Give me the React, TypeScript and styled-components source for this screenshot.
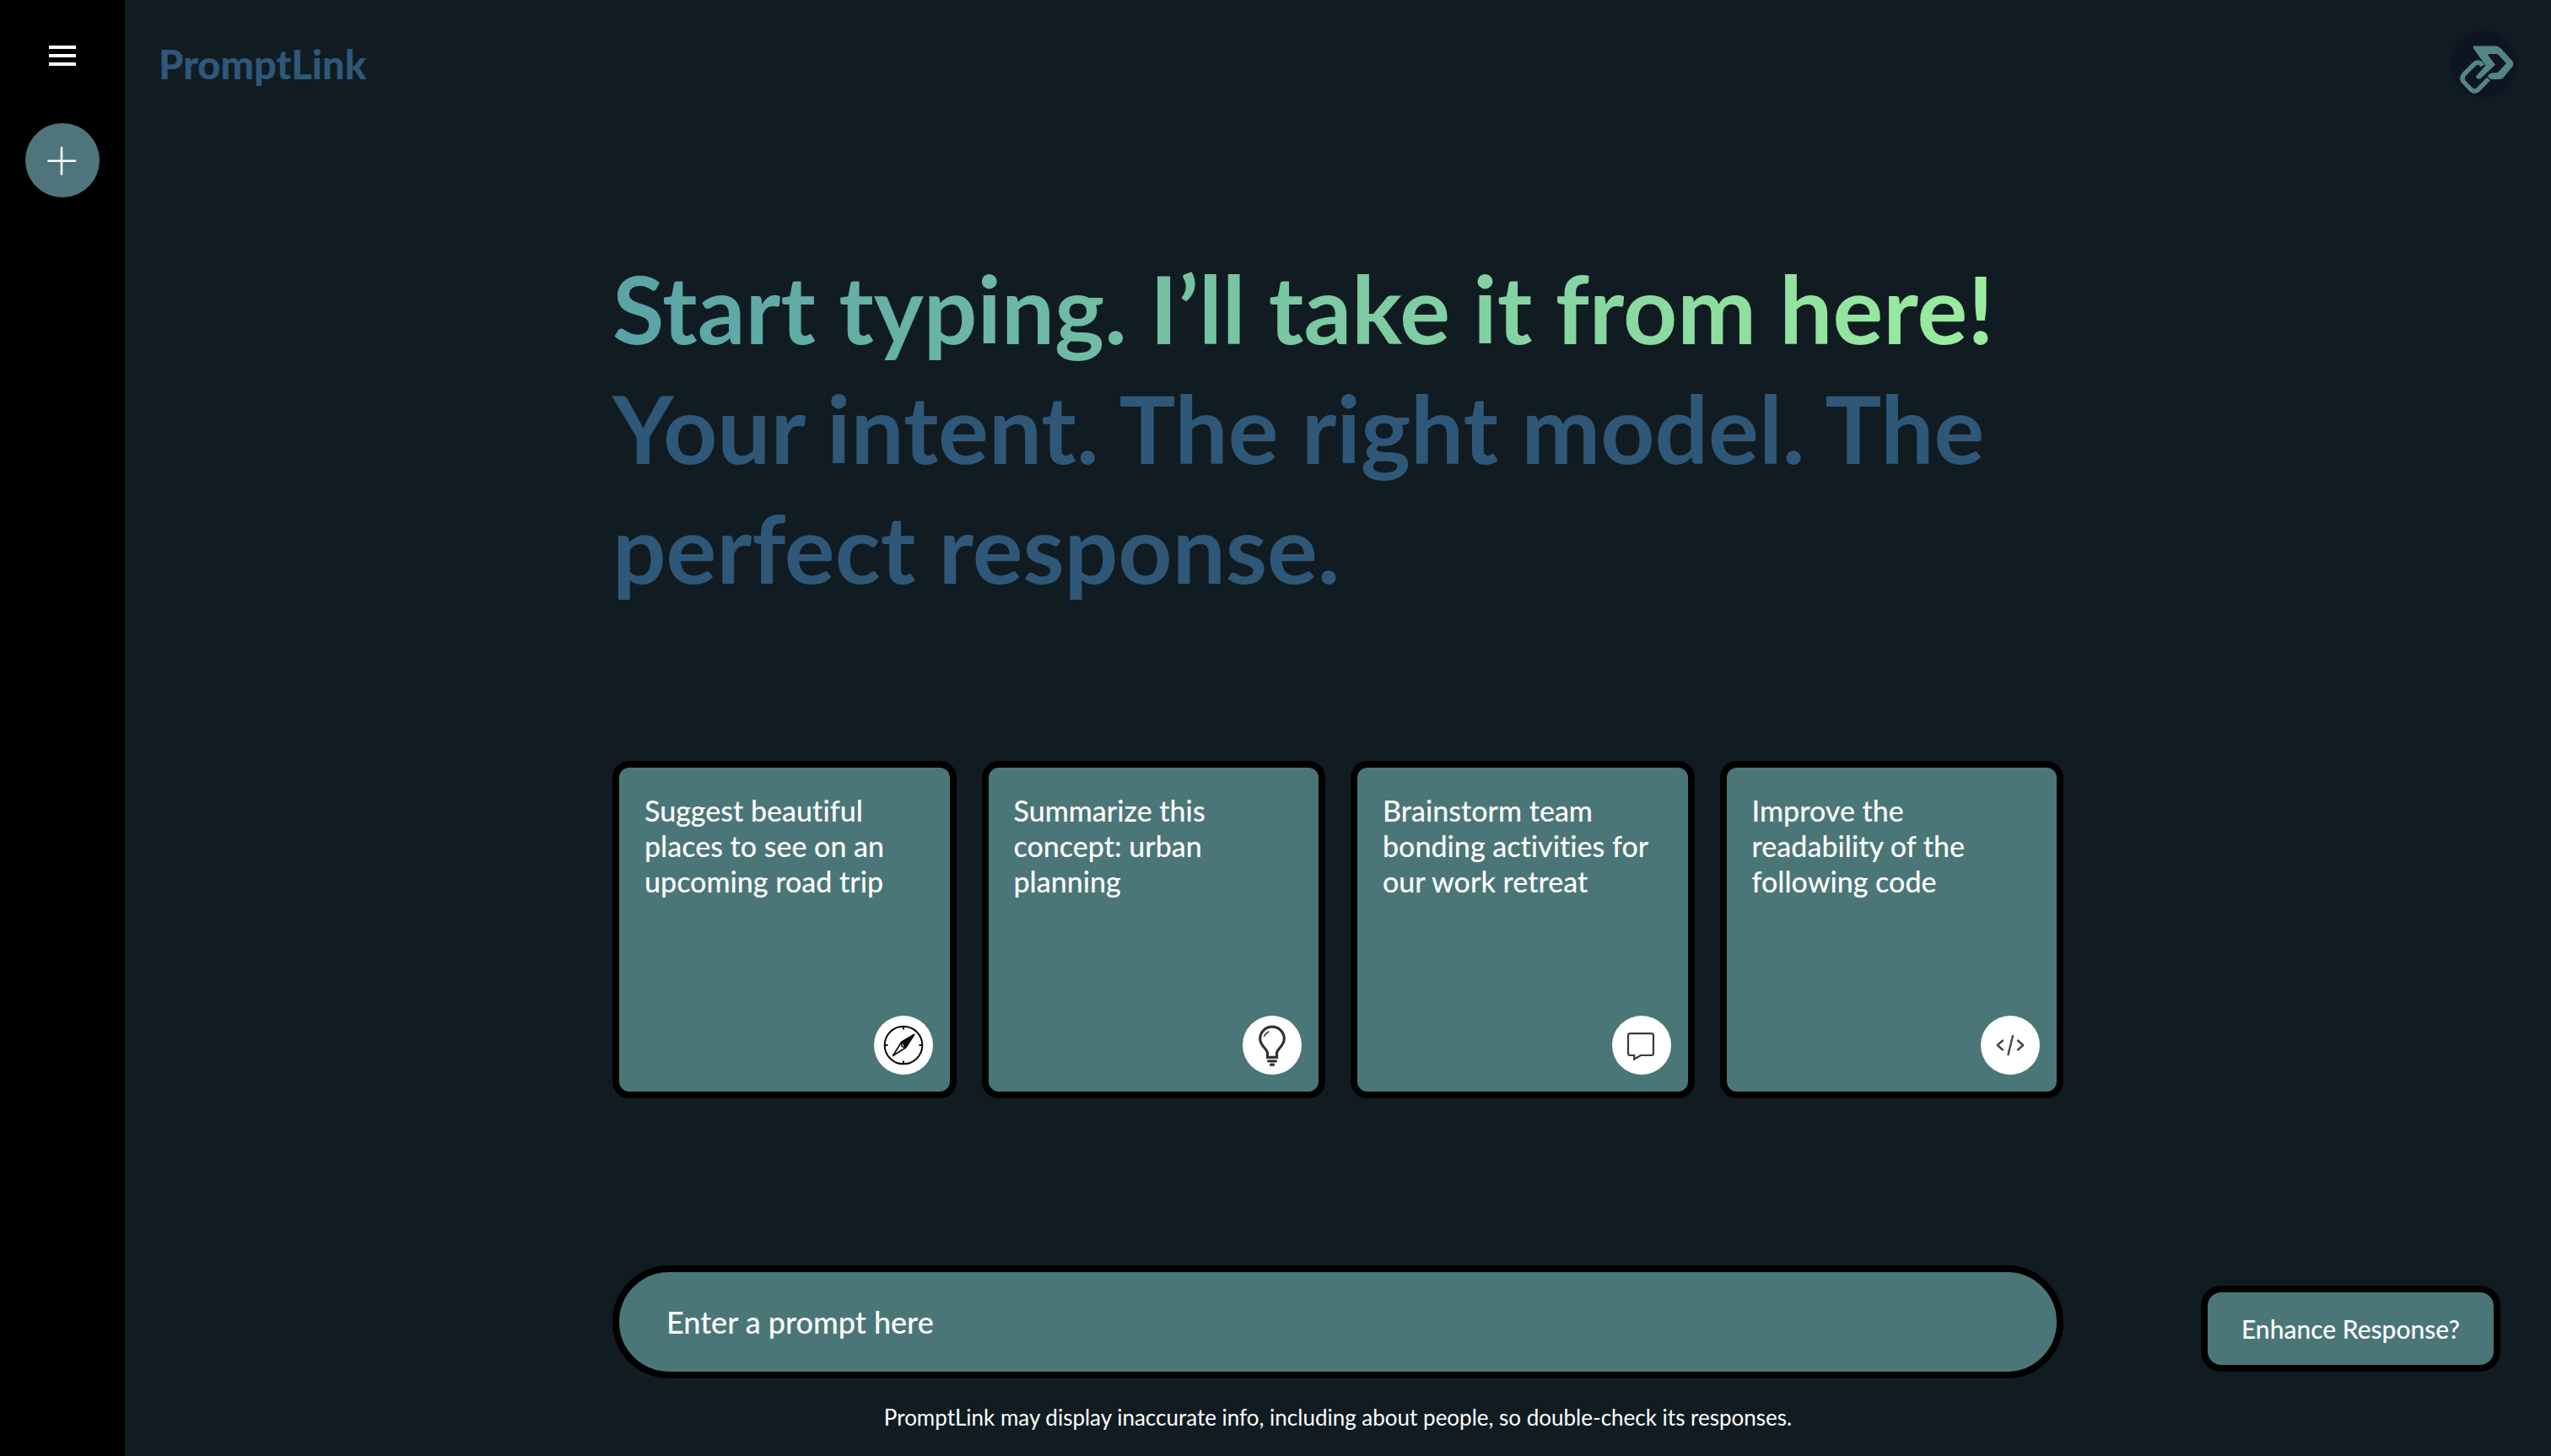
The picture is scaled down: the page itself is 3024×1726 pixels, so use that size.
import React from "react";
import styled, { createGlobalStyle } from "styled-components";

const GlobalStyle = createGlobalStyle`
  *, *::before, *::after { box-sizing: border-box; }
  body {
    margin: 0;
    background: #111c22;
    color: #fff;
    font-family: Lato, "Open Sans", sans-serif;
    font-variant-ligatures: none;
  }
  button, input { font: inherit; color: inherit; font-variant-ligatures: none; }
`;

const Shell = styled.div`
  display: flex;
  min-height: 100vh;
`;

const Sidebar = styled.nav`
  display: flex;
  flex-direction: column;
  align-items: center;
  gap: 64px;
  flex: none;
  width: 148px;
  padding: 50px 30px;
  background: #000;
`;

const MenuButton = styled.button`
  display: flex;
  padding: 0;
  border: 0;
  background: none;
  cursor: pointer;
`;

const NewChatButton = styled.button`
  display: flex;
  align-items: center;
  justify-content: center;
  width: 88px;
  height: 88px;
  padding: 0;
  border: 0;
  border-radius: 50%;
  background: #4f747c;
  cursor: pointer;
`;

const Main = styled.main`
  display: flex;
  flex-direction: column;
  flex: 1;
  min-width: 0;
`;

const Header = styled.header`
  display: flex;
  align-items: center;
  justify-content: space-between;
  padding: 36px 40px;
`;

const Brand = styled.p`
  margin: 0;
  color: #2f5778;
  font-size: 47px;
  font-weight: 900;
  line-height: 60px;
`;

const Content = styled.div`
  display: flex;
  flex-direction: column;
  flex: 1;
  width: 100%;
  max-width: 1720px;
  margin: 0 auto;
`;

const Greeting = styled.h1`
  margin: 142px 0 182px;
  color: #2f5778;
  font-size: 112px;
  font-weight: 700;
  line-height: 142px;
`;

const Accent = styled.span`
  display: block;
  width: fit-content;
  background: linear-gradient(80deg, #59a2a7, #9ced9f);
  background-clip: text;
  -webkit-background-clip: text;
  color: transparent;
`;

const Cards = styled.div`
  display: grid;
  grid-template-columns: repeat(4, 1fr);
  gap: 30px;
`;

const Card = styled.button`
  display: flex;
  flex-direction: column;
  justify-content: space-between;
  min-height: 400px;
  padding: 30px 20px 20px 30px;
  border: 8px solid #000;
  border-radius: 20px;
  background: #4b7677;
  font-size: 34px;
  font-weight: 500;
  line-height: 42px;
  text-align: left;
  cursor: pointer;
`;

const CardIcon = styled.span`
  display: flex;
  align-items: center;
  justify-content: center;
  align-self: flex-end;
  width: 70px;
  height: 70px;
  border-radius: 50%;
  background: #fff;
`;

const PromptArea = styled.form`
  margin-top: auto;
  padding-bottom: 30px;
`;

const PromptInput = styled.input`
  display: block;
  width: 100%;
  height: 134px;
  padding: 0 56px;
  border: 8px solid #000;
  border-radius: 67px;
  background: #4b7677;
  font-size: 36px;
  font-weight: 500;
  outline: none;
  &::placeholder { color: #fff; opacity: 1; }
`;

const Notice = styled.p`
  margin: 30px 0 0;
  font-size: 26px;
  line-height: 32px;
  text-align: center;
`;

const EnhanceButton = styled.button`
  position: fixed;
  right: 60px;
  bottom: 100px;
  padding: 24px 40px;
  border: 8px solid #000;
  border-radius: 24px;
  background: #4b7677;
  font-size: 30px;
  font-weight: 500;
  line-height: 38px;
  cursor: pointer;
`;

const MenuIcon = () => (
  <svg width="32" height="32" viewBox="0 0 32 32" fill="#fff" aria-hidden="true">
    <rect y="4" width="32" height="4" />
    <rect y="14" width="32" height="4" />
    <rect y="24" width="32" height="4" />
  </svg>
);

const PlusIcon = () => (
  <svg width="40" height="40" viewBox="0 0 40 40" stroke="#fff" strokeWidth="2.6" strokeLinecap="round" aria-hidden="true">
    <path d="M3.500 20.800H35M19 5v31.500" />
  </svg>
);

const LinkLogo = () => (
  <svg width="80" height="80" viewBox="0 0 80 80" role="img" aria-label="PromptLink">
    <circle cx="40" cy="40" r="40" fill="#0e1521" />
    <path
      fill="#528684"
      d="M28.500 18.600H55.500Q59 19.500 61.500 22.300L74.300 36.500Q76.500 39.500 74.300 43L63.500 56Q61.500 58 59 58H49.500Q46 57.500 45.300 53.500Q47.500 50.500 51 50.300H56.500L67 39L56.500 28H46.500L45 29L54 40.700L36.500 57.300Q31.500 58.500 31 54.500L42.500 41.800L28.500 22Q27 19.500 28.500 18.600Z"
    />
    <path
      fill="none"
      stroke="#528684"
      strokeWidth="5.400"
      strokeLinejoin="round"
      d="M38.800 42Q35 35.500 29.500 39.500L16.500 52.500Q13.500 56.500 16 60.500L25.500 70.500Q29.500 73.500 33.500 70.300L46 57.500"
    />
  </svg>
);

const CompassIcon = () => (
  <svg width="50" height="50" viewBox="0 0 50 50" fill="none" stroke="#0a0a0a" strokeWidth="2" aria-hidden="true">
    <circle cx="25" cy="25" r="22.300" />
    <path d="M25 3v3.500M25 43.500V47M3 25h3.500M43.500 25H47" />
    <path d="M37.500 12.500L22.500 21.500L12.500 37.500L27.500 28Z" strokeWidth="1.600" strokeLinejoin="round" />
    <path d="M37.500 12.500L22.500 21.500Q25.500 24 27.500 28Z" fill="#0a0a0a" strokeWidth="1.600" strokeLinejoin="round" />
    <path d="M22.500 21.500L23 26.500L27.500 28" strokeWidth="1.400" />
  </svg>
);

const BulbIcon = () => (
  <svg width="50" height="50" viewBox="0 0 50 50" fill="none" stroke="#333" strokeWidth="3.200" aria-hidden="true">
    <path d="M19.500 39.300V34.500C19.500 29.500 10.700 26 10.700 17.500A14.300 14.300 0 0 1 39.300 17.500C39.300 26 30.500 29.500 30.500 34.500V39.300Z" />
    <path d="M15.500 14.500Q17.500 10.500 21 9" strokeWidth="1.400" strokeLinecap="round" />
    <path d="M20.500 43.800H29.500M23.500 48.200H26.500" strokeLinecap="round" />
  </svg>
);

const MessageIcon = () => (
  <svg width="50" height="50" viewBox="0 0 50 50" fill="none" stroke="#3a3a3c" strokeWidth="2.200" aria-hidden="true">
    <path d="M11.500 11.200H36.500Q39 11.200 39 13.700V34.500Q39 37 36.500 37H24L16.200 41.500V37H11.500Q9 37 9 34.500V13.700Q9 11.200 11.500 11.200Z" />
  </svg>
);

const CodeIcon = () => (
  <svg width="50" height="50" viewBox="0 0 50 50" fill="none" stroke="#45474f" strokeWidth="2.400" strokeLinecap="round" strokeLinejoin="round" aria-hidden="true">
    <path d="M16 19.500L9.800 25L16 30.500M34 19.500L40.200 25L34 30.500M28 14L22.500 36.300" />
  </svg>
);

const suggestions = [
  { text: "Suggest beautiful places to see on an upcoming road trip", Icon: CompassIcon },
  { text: "Summarize this concept: urban planning", Icon: BulbIcon },
  { text: "Brainstorm team bonding activities for our work retreat", Icon: MessageIcon },
  { text: "Improve the readability of the following code", Icon: CodeIcon },
];

export default function App() {
  return (
    <>
      <GlobalStyle />
      <Shell>
        <Sidebar>
          <MenuButton type="button" aria-label="Menu">
            <MenuIcon />
          </MenuButton>
          <NewChatButton type="button" aria-label="New chat">
            <PlusIcon />
          </NewChatButton>
        </Sidebar>
        <Main>
          <Header>
            <Brand>PromptLink</Brand>
            <LinkLogo />
          </Header>
          <Content>
            <Greeting>
              <Accent>Start typing. I’ll take it from here!</Accent>
              Your intent. The right model. The perfect response.
            </Greeting>
            <Cards>
              {suggestions.map(({ text, Icon }) => (
                <Card key={text} type="button">
                  {text}
                  <CardIcon>
                    <Icon />
                  </CardIcon>
                </Card>
              ))}
            </Cards>
            <PromptArea onSubmit={(e) => e.preventDefault()}>
              <PromptInput type="text" aria-label="Enter a prompt here" placeholder="Enter a prompt here" />
              <Notice>
                PromptLink may display inaccurate info, including about people, so double-check its responses.
              </Notice>
            </PromptArea>
          </Content>
        </Main>
        <EnhanceButton type="button">Enhance Response?</EnhanceButton>
      </Shell>
    </>
  );
}
